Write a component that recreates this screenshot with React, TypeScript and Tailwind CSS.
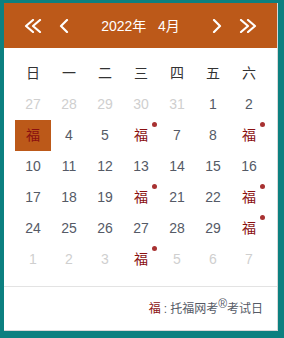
import React from "react";

type Cell = { t: string; other?: boolean; fu?: boolean; dot?: boolean; sel?: boolean };

const rows: Cell[][] = [
  [{ t: "27", other: true }, { t: "28", other: true }, { t: "29", other: true }, { t: "30", other: true }, { t: "31", other: true }, { t: "1" }, { t: "2" }],
  [{ t: "福", fu: true, sel: true }, { t: "4" }, { t: "5" }, { t: "福", fu: true, dot: true }, { t: "7" }, { t: "8" }, { t: "福", fu: true, dot: true }],
  [{ t: "10" }, { t: "11" }, { t: "12" }, { t: "13" }, { t: "14" }, { t: "15" }, { t: "16" }],
  [{ t: "17" }, { t: "18" }, { t: "19" }, { t: "福", fu: true, dot: true }, { t: "21" }, { t: "22" }, { t: "福", fu: true, dot: true }],
  [{ t: "24" }, { t: "25" }, { t: "26" }, { t: "27" }, { t: "28" }, { t: "29" }, { t: "福", fu: true, dot: true }],
  [{ t: "1", other: true }, { t: "2", other: true }, { t: "3", other: true }, { t: "福", fu: true, dot: true }, { t: "5", other: true }, { t: "6", other: true }, { t: "7", other: true }],
];

const week = ["日", "一", "二", "三", "四", "五", "六"];

function Chev({ dir, double }: { dir: "l" | "r"; double?: boolean }) {
  const w = double ? 18 : 10;
  const paths =
    dir === "l"
      ? double
        ? ["M9 1 L2 7 L9 13", "M16 1 L9 7 L16 13"]
        : ["M8 1 L2 7 L8 13"]
      : double
      ? ["M2 1 L9 7 L2 13", "M9 1 L16 7 L9 13"]
      : ["M2 1 L8 7 L2 13"];
  return (
    <svg width={w} height={14} viewBox={`0 0 ${w} 14`} fill="none">
      {paths.map((d, i) => (
        <path key={i} d={d} stroke="white" strokeWidth={2.2} strokeLinecap="round" strokeLinejoin="round" />
      ))}
    </svg>
  );
}

export default function App() {
  return (
    <div
      className="w-[284px] h-[338px] bg-[#0c8080] pt-[3px] pl-[4px]"
      style={{ fontFamily: '"Liberation Sans", "Noto Sans CJK SC", sans-serif' }}
    >
      <div className="w-[274px] h-[328px] bg-white border-r border-b border-[#d8d8d8] flex flex-col">
        <div className="h-[45px] bg-[#bc5919] flex items-center text-white">
          <div className="w-[20px]" />
          <div className="w-[18px] flex justify-center"><Chev dir="l" double /></div>
          <div className="w-[17px]" />
          <div className="w-[10px] flex justify-center"><Chev dir="l" /></div>
          <div className="flex-1 text-center text-[14px] leading-none">
            2022年&nbsp;&nbsp;&nbsp;4月
          </div>
          <div className="w-[10px] flex justify-center"><Chev dir="r" /></div>
          <div className="w-[17px]" />
          <div className="w-[18px] flex justify-center"><Chev dir="r" double /></div>
          <div className="w-[20px]" />
        </div>
        <div className="pt-[10px] pl-[11px]">
          <div className="grid grid-cols-[repeat(7,36px)]">
            {week.map((w) => (
              <div key={w} className="h-[31px] flex items-center justify-center text-[14px] text-[#333]">
                {w}
              </div>
            ))}
          </div>
          {rows.map((r, ri) => (
            <div key={ri} className="grid grid-cols-[repeat(7,36px)]">
              {r.map((c, ci) => (
                <div
                  key={ci}
                  className={
                    "relative h-[31px] flex items-center justify-center text-[14px] " +
                    (c.sel ? "bg-[#bc5919] " : "") +
                    (c.fu ? "text-[#8a1010]" : c.other ? "text-[#cfcfcf]" : "text-[#555a66]")
                  }
                >
                  {c.t}
                  {c.dot && (
                    <span className="absolute top-[2px] right-[2px] w-[5px] h-[5px] rounded-full bg-[#a83232]" />
                  )}
                </div>
              ))}
            </div>
          ))}
        </div>
        <div className="mt-[11px] border-t border-[#e3e3e3] flex-1 flex items-center justify-end pr-[14px] text-[12px] text-[#555a66]">
          <span className="text-[#8a1010]">福</span>
          <span className="mx-[3px]">:</span>
          <span>托福网考</span>
          <sup className="text-[12px] top-[-0.4em]">®</sup>
          <span>考试日</span>
        </div>
      </div>
    </div>
  );
}
